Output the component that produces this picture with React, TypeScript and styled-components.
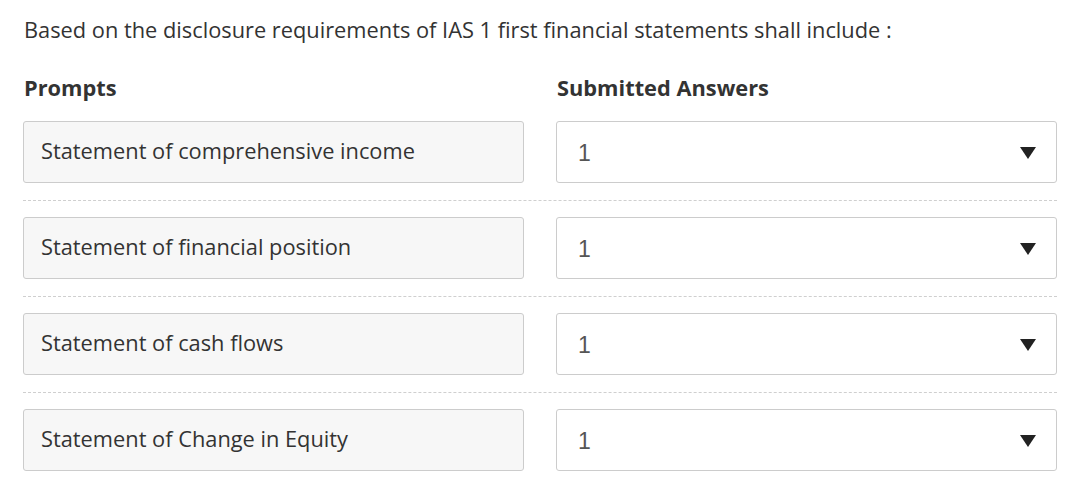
import { createGlobalStyle, styled } from 'styled-components';

const GlobalStyle = createGlobalStyle`
  html, body {
    margin: 0;
    padding: 0;
    background: #ffffff;
  }
  body {
    font-family: "Open Sans", "Noto Sans", sans-serif;
    color: #333333;
  }
`;

const rows = [
  'Statement of comprehensive income',
  'Statement of financial position',
  'Statement of cash flows',
  'Statement of Change in Equity',
];

export default function App() {
  return (
    <>
      <GlobalStyle />
      <Page>
        <Question>
          Based on the disclosure requirements of IAS 1 first financial statements shall include :
        </Question>
        <HeaderRow>
          <ColumnTitle>Prompts</ColumnTitle>
          <ColumnTitle>Submitted Answers</ColumnTitle>
        </HeaderRow>
        <List>
          {rows.map((prompt, i) => (
            <Row key={prompt} $last={i === rows.length - 1}>
              <PromptBox>{prompt}</PromptBox>
              <Select>
                <SelectValue>1</SelectValue>
                <Caret viewBox="0 0 16 12" aria-hidden>
                  <path d="M0 0 H16 L8 12 Z" fill="#222" />
                </Caret>
              </Select>
            </Row>
          ))}
        </List>
      </Page>
    </>
  );
}

const Page = styled.div`
  padding: 14px 14px 0 23px;
`;

const Question = styled.p`
  margin: 0 0 0 1px;
  font-size: 21.8px;
  line-height: 32px;
  color: #333;
`;

const HeaderRow = styled.div`
  display: grid;
  grid-template-columns: 1fr 1fr;
  column-gap: 32px;
  margin-top: 26px;
`;

const ColumnTitle = styled.h3`
  margin: 0 0 0 1px;
  font-size: 21.8px;
  font-weight: 700;
  line-height: 32px;
  color: #333;
`;

const List = styled.div`
  margin-top: 17px;
  display: flex;
  flex-direction: column;
`;

const Row = styled.div<{ $last: boolean }>`
  display: grid;
  grid-template-columns: 1fr 1fr;
  column-gap: 32px;
  padding-bottom: ${(p) => (p.$last ? '0' : '17px')};
  margin-bottom: ${(p) => (p.$last ? '0' : '16px')};
  border-bottom: ${(p) => (p.$last ? 'none' : '1px dashed #cfcfcf')};
`;

const PromptBox = styled.div`
  height: 62px;
  box-sizing: border-box;
  display: flex;
  align-items: center;
  padding: 0 17px 3px;
  background: #f7f7f7;
  border: 1px solid #cccccc;
  border-radius: 3px;
  font-size: 21.8px;
  color: #333;
`;

const Select = styled.div`
  height: 62px;
  box-sizing: border-box;
  display: flex;
  align-items: center;
  justify-content: space-between;
  padding: 0 20px 0 21px;
  background: #ffffff;
  border: 1px solid #cccccc;
  border-radius: 3px;
`;

const SelectValue = styled.span`
  font-family: "Liberation Sans", Arial, sans-serif;
  font-size: 23px;
  font-weight: 400;
  color: #555;
  padding-top: 3px;
`;

const Caret = styled.svg`
  width: 16px;
  height: 12px;
  margin-top: 1px;
`;
